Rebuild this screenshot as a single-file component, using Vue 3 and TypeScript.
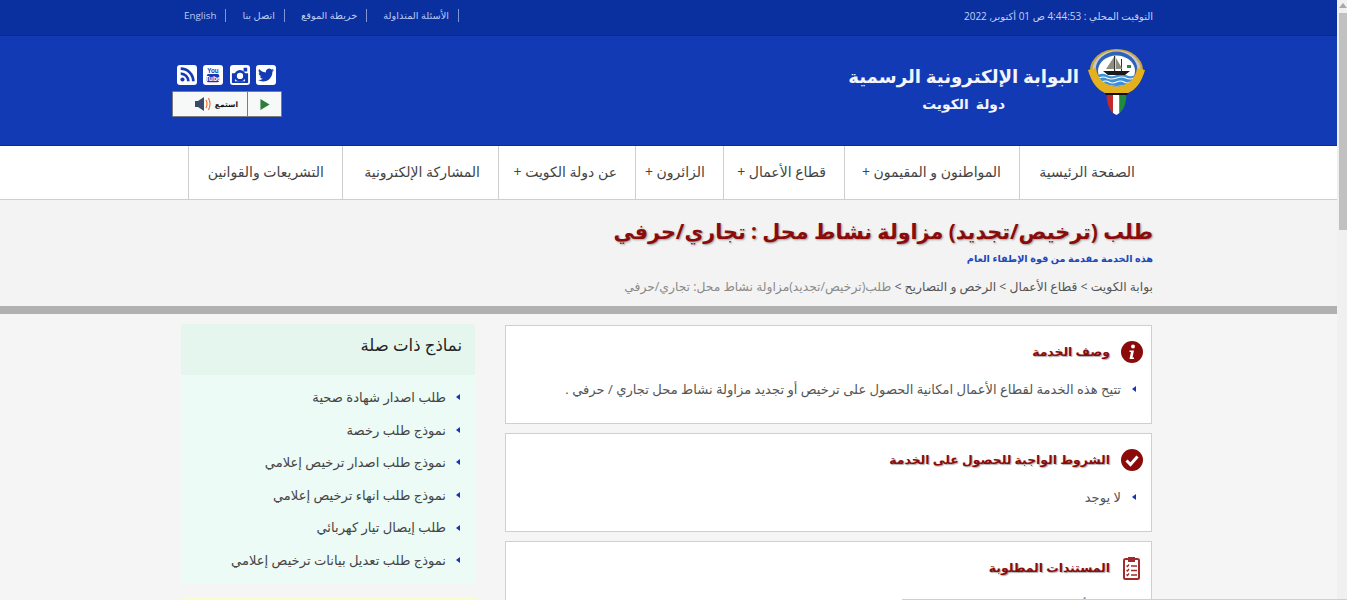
<script setup lang="ts">
const topLinks = ['الأسئلة المتداولة', 'خريطة الموقع', 'اتصل بنا', 'English'];

const navItems = [
  'الصفحة الرئيسية',
  'المواطنون و المقيمون +',
  'قطاع الأعمال +',
  'الزائرون +',
  'عن دولة الكويت +',
  'المشاركة الإلكترونية',
  'التشريعات والقوانين',
];

const relatedForms = [
  'طلب اصدار شهادة صحية',
  'نموذج طلب رخصة',
  'نموذج طلب اصدار ترخيص إعلامي',
  'نموذج طلب انهاء ترخيص إعلامي',
  'طلب إيصال تيار كهربائي',
  'نموذج طلب تعديل بيانات ترخيص إعلامي',
];
</script>

<template>
  <div class="viewport">
    <div class="page" dir="rtl">
      <div class="topbar">
        <div class="topbar__inner">
          <span class="clock">التوقيت المحلي : 4:44:53 ص 01 أكتوبر, 2022</span>
          <ul class="toplinks">
            <li v-for="link in topLinks" :key="link">{{ link }}</li>
          </ul>
        </div>
      </div>

      <header class="masthead">
        <div class="brand">
          <svg class="emblem" viewBox="0 0 57 67" aria-hidden="true">
            <ellipse cx="28.5" cy="22" rx="26.5" ry="21" fill="#c9a63a" />
            <ellipse cx="28.5" cy="22" rx="24" ry="19.5" fill="#c6c8cb" />
            <ellipse cx="28.5" cy="22" rx="21" ry="18.500" fill="#2f63b8" />
            <ellipse cx="28.5" cy="23" rx="18.500" ry="15.500" fill="#fff" />
            <path d="M10 27q4.500-2.500 9 0t9.500 0 9.500 0 9 0v2q-6 9-18.500 9T10 29z" fill="#3d8fd6" />
            <path d="M11 30q4-2 8 0t9.500 0 9.500 0 8 0M14 34q3.500-2 7 0t7.500 0 7.500 0 6 0" fill="none" stroke="#fff" stroke-width="1.200" />
            <path d="M15 23h27l-5 4H20z" fill="#1a1a1a" />
            <path d="M26 23V8h1.200v15zM33 23V11h1v12z" fill="#333" />
            <path d="M26 9l-8 12h8zM28 10l6.500 11H28z" fill="#8d8d80" />
            <path d="M39 17h4v3h-4z" fill="#2e8b3d" />
            <path d="M0 22L8 20Q10 36 28.500 39 47 36 49 20L57 22Q52 40 40 45H33L28.500 48 24 45H17Q5 40 0 22z" fill="#e4b01e" />
            <path d="M17 45h23l-2.500 4h-18z" fill="#111" />
            <path d="M18.500 47H25v18C21 62 19 55 18.500 47z" fill="#c22a2a" />
            <path d="M25 47h6.500v18l-3 2-3.500-2z" fill="#fff" />
            <path d="M31.500 47h7c-.5 8-2.500 15-7 18z" fill="#1f8a3a" />
          </svg>
          <div class="brand__text">
            <div class="brand__title">البوابة الإلكترونية الرسمية</div>
            <div class="brand__sub">دولة&nbsp; الكويت</div>
          </div>
        </div>

        <div class="tools">
          <div class="socials">
            <a class="social">
              <svg class="social__bird" viewBox="0 0 24 24"><path fill="#143bb5" d="M23.953 4.570a10 10 0 01-2.825.775 4.958 4.958 0 002.163-2.723c-.951.555-2.005.959-3.127 1.184a4.920 4.920 0 00-8.384 4.482C7.690 8.095 4.067 6.130 1.640 3.162a4.822 4.822 0 00-.666 2.475c0 1.710.870 3.213 2.188 4.096a4.904 4.904 0 01-2.228-.616v.060a4.923 4.923 0 003.946 4.827 4.996 4.996 0 01-2.212.085 4.936 4.936 0 004.604 3.417 9.867 9.867 0 01-6.102 2.105c-.390 0-.779-.023-1.170-.067a13.995 13.995 0 007.557 2.209c9.053 0 13.998-7.496 13.998-13.985 0-.210 0-.420-.015-.630A9.935 9.935 0 0024 4.590z" /></svg>
            </a>
            <a class="social">
              <svg viewBox="0 0 20 20">
                <circle cx="10" cy="11" r="5" fill="none" stroke="#143bb5" stroke-width="3" />
                <path fill="#143bb5" d="M1 8h3.500v9h11V8H19v11H1zM14 2h4v4h-4z" />
              </svg>
            </a>
            <a class="social">
              <svg viewBox="0 0 20 20">
                <rect x="3" y="9" width="14" height="9" rx="2" fill="#143bb5" />
                <text class="yt yt--you" x="10" y="7.500" text-anchor="middle">You</text>
                <text class="yt yt--tube" x="10" y="16.500" text-anchor="middle">Tube</text>
              </svg>
            </a>
            <a class="social">
              <svg viewBox="0 0 20 20">
                <circle cx="5" cy="15" r="2.300" fill="#143bb5" />
                <path fill="none" stroke="#143bb5" stroke-width="3" d="M3 8.500a8.500 8.500 0 018.500 8.500M3 3a14 14 0 0114 14" />
              </svg>
            </a>
          </div>
          <div class="listen">
            <span class="listen__play"><svg viewBox="0 0 10 12"><path d="M0 0l10 6-10 6z" fill="#2b7d3c" /></svg></span>
            <span class="listen__label">
              <b>استمع</b>
              <svg viewBox="0 0 17 14">
                <path d="M0 4h3l6-4v14l-6-4H0z" fill="#3b4a66" />
                <path d="M11 3q2 4 0 8M13.500 1q3 6 0 12" fill="none" stroke="#e8743b" stroke-width="1.200" />
              </svg>
            </span>
          </div>
        </div>
      </header>

      <nav class="mainnav">
        <ul class="mainnav__list">
          <li v-for="item in navItems" :key="item">{{ item }}</li>
        </ul>
      </nav>

      <section class="hero">
        <div class="hero__inner">
          <h1>طلب (ترخيص/تجديد) مزاولة نشاط محل : تجاري/حرفي</h1>
          <p class="hero__provider">هذه الخدمة مقدمة من قوة الإطفاء العام</p>
          <p class="crumbs">
            <span>بوابة الكويت &gt; قطاع الأعمال &gt; الرخص و التصاريح &gt;</span> طلب(ترخيص/تجديد)مزاولة نشاط محل: تجاري/حرفي
          </p>
        </div>
      </section>

      <div class="content">
        <main class="cards">
          <article class="card">
            <h2>
              <svg class="card__icon" viewBox="0 0 22 22">
                <circle cx="11" cy="11" r="11" fill="#8b0b0b" />
                <circle cx="12" cy="5.500" r="2" fill="#fff" />
                <path d="M8.500 9.500h4.500l-1.500 7h1.500v1.500H8.500l1.500-7H8.500z" fill="#fff" />
              </svg>
              وصف الخدمة
            </h2>
            <ul class="bullets">
              <li>تتيح هذه الخدمة لقطاع الأعمال امكانية الحصول على ترخيص أو تجديد مزاولة نشاط محل تجاري / حرفي .</li>
            </ul>
          </article>

          <article class="card">
            <h2>
              <svg class="card__icon" viewBox="0 0 22 22">
                <circle cx="11" cy="11" r="11" fill="#8b0b0b" />
                <path d="M5.500 11.500l4 4 7-8" fill="none" stroke="#fff" stroke-width="3" />
              </svg>
              الشروط الواجبة للحصول على الخدمة
            </h2>
            <ul class="bullets">
              <li>لا يوجد</li>
            </ul>
          </article>

          <article class="card">
            <h2>
              <svg class="card__icon card__icon--docs" viewBox="0 0 17 24">
                <rect x="1" y="3" width="15" height="20" rx="1.500" fill="none" stroke="#a32a2a" stroke-width="2" />
                <path d="M5 1h7v5H5z" fill="#a32a2a" />
                <path d="M3.500 9.500l1 1 1.500-2M3.500 14l1 1 1.500-2M3.500 18.500l1 1 1.500-2M8 10h6M8 14.500h6M8 19h6" fill="none" stroke="#a32a2a" stroke-width="1.300" />
              </svg>
              المستندات المطلوبة
            </h2>
            <ul class="bullets">
              <li>صورة أصلية</li>
            </ul>
          </article>
        </main>

        <aside class="side">
          <div class="side__box">
            <h3>نماذج ذات صلة</h3>
            <ul class="bullets bullets--side">
              <li v-for="form in relatedForms" :key="form">{{ form }}</li>
            </ul>
          </div>
          <div class="side__note"></div>
        </aside>
      </div>
    </div>

    <div class="scrollbar">
      <span class="scrollbar__arrow"></span>
      <span class="scrollbar__thumb"></span>
    </div>
    <div class="fold-line"></div>
  </div>
</template>

<style scoped>
ul {
  list-style: none;
  margin: 0;
  padding: 0;
}

.viewport {
  position: relative;
  display: flex;
  height: 600px;
  overflow: hidden;
  font-family: "Open Sans", "DejaVu Sans", Tahoma, sans-serif;
  background: #f0f0f0;
}

.page {
  flex: 0 0 1337px;
  height: 600px;
  overflow: hidden;
  background: #f5f5f5;
}

.topbar {
  height: 36px;
  box-sizing: border-box;
  background: #0a2f9f;
  border-bottom: 1px solid #0a2a8e;
}

.topbar__inner {
  display: flex;
  justify-content: space-between;
  align-items: center;
  height: 31px;
  padding: 0 184px 0 168px;
}

.clock {
  font-size: 10px;
  color: #c2d2f5;
}

.toplinks {
  display: flex;
}

.toplinks li {
  font-size: 9.800px;
  line-height: 13px;
  color: #bccdf3;
  border-right: 1px solid #7f95d6;
  padding-right: 9px;
  margin-left: 16px;
}

.masthead {
  display: flex;
  justify-content: space-between;
  height: 110px;
  box-sizing: border-box;
  padding: 12px 192px 0 172px;
  background: #133ab5;
  border-bottom: 1px solid #0b2c97;
}

.brand {
  display: flex;
  gap: 9px;
}

.emblem {
  width: 57px;
  height: 67px;
  flex: none;
}

.brand__text {
  padding-top: 15px;
  white-space: nowrap;
}

.brand__title {
  font-size: 18.200px;
  line-height: 26px;
  font-weight: 700;
  color: #f2f5fc;
}

.brand__sub {
  margin-top: 5px;
  margin-right: 74px;
  font-size: 13.800px;
  font-weight: 700;
  color: #f2f5fc;
}

.tools {
  display: flex;
  flex-direction: column;
  width: 110px;
  flex: none;
  padding-top: 17px;
  gap: 6px;
}

.socials {
  display: flex;
  gap: 6.500px;
  padding: 0 6px 0 7px;
}

.social {
  display: flex;
  width: 20px;
  height: 20px;
  flex: none;
  background: #fff;
  border-radius: 3px;
}

.social svg {
  width: 18px;
  height: 18px;
  margin: 1px;
}

.social .social__bird {
  width: 16px;
  height: 16px;
  margin: 2px;
}

.yt {
  font-family: "Liberation Sans Narrow", "Liberation Sans", sans-serif;
  font-weight: 700;
  direction: ltr;
}

.yt--you {
  font-size: 7px;
  fill: #143bb5;
}

.yt--tube {
  font-size: 7.500px;
  fill: #fff;
}

.listen {
  display: flex;
  height: 26px;
  box-sizing: border-box;
  background: #f7f8f8;
  border: 1px solid #7b7b80;
  border-radius: 1px;
}

.listen__play {
  display: flex;
  align-items: center;
  justify-content: center;
  width: 33px;
  flex: none;
  border-left: 1px solid #7b7b80;
}

.listen__play svg {
  width: 10px;
  height: 11px;
}

.listen__label {
  display: flex;
  align-items: center;
  gap: 3px;
  padding-right: 9px;
}

.listen__label b {
  font-size: 7.500px;
  color: #111;
}

.listen__label svg {
  width: 17px;
  height: 14px;
}

.mainnav {
  height: 54px;
  box-sizing: border-box;
  background: #fff;
  border-bottom: 1px solid #cfcfcf;
}

.mainnav__list {
  display: grid;
  grid-template-columns: 134px 175px 121px 88px 137px 156px 154px;
  height: 53px;
  padding-right: 184px;
}

.mainnav__list li {
  display: flex;
  align-items: center;
  padding: 0 18px 2px 0;
  border-left: 1px solid #cfcfcf;
  font-size: 14px;
  color: #444;
  white-space: nowrap;
}

.hero {
  height: 106px;
  box-sizing: border-box;
  background: #f3f3f3;
}

.hero__inner {
  padding: 15px 184px 0 0;
}

.hero h1 {
  margin: 0;
  font-size: 20.700px;
  line-height: 32px;
  font-weight: 700;
  color: #8b0a0a;
  text-shadow: 1px 1px 2px #999;
}

.hero__provider {
  margin: 4px 0 0;
  font-size: 9.700px;
  line-height: 16px;
  font-weight: 700;
  color: #1f48b8;
}

.crumbs {
  margin: 11px 0 0;
  font-size: 12.300px;
  line-height: 18px;
  color: #8a8a8a;
}

.crumbs span {
  color: #555;
}

.content {
  display: flex;
  gap: 30px;
  border-top: 8px solid #b0b0b0;
  padding: 11px 185px 0 0;
}

.cards {
  display: flex;
  flex-direction: column;
  gap: 9px;
  width: 647px;
  flex: none;
}

.card {
  min-height: 99px;
  box-sizing: border-box;
  background: #fff;
  border: 1px solid #cfcfcf;
  padding: 14px 8px 0;
}

.card h2 {
  display: flex;
  align-items: center;
  gap: 11px;
  margin: 0;
  font-size: 12.400px;
  line-height: 24px;
  font-weight: 700;
  color: #8b0a0a;
  text-shadow: 1px 1px 1px #aaa;
}

.card__icon {
  width: 22px;
  height: 22px;
  flex: none;
}

.card__icon--docs {
  width: 17px;
  height: 24px;
  margin: 0 3px 0 2px;
}

.bullets li {
  position: relative;
  padding-right: 15px;
  font-size: 13.100px;
  color: #555;
}

.bullets li::before {
  content: "";
  position: absolute;
  right: 0;
  top: 50%;
  margin-top: -3px;
  border-style: solid;
  border-width: 3.500px 4px 3.500px 0;
  border-color: transparent #1535b5 transparent transparent;
}

.card .bullets {
  margin-top: 12px;
  padding-right: 7px;
}

.card .bullets li {
  line-height: 26px;
}

.side {
  width: 294px;
  flex: none;
  margin-top: -1px;
}

.side__box {
  height: 259px;
  box-sizing: border-box;
  background: #ecfbf6;
}

.side__box h3 {
  margin: 0;
  height: 51px;
  padding: 0 13px;
  font-size: 16.500px;
  font-weight: 400;
  line-height: 42px;
  color: #222;
  background: #e5f6ef;
}

.bullets--side {
  padding: 6px 15px 0 0;
}

.bullets--side li {
  padding-right: 14px;
  font-size: 13.100px;
  line-height: 32.600px;
  color: #444;
  white-space: nowrap;
}

.side__note {
  height: 40px;
  margin-top: 15px;
  background: #fbfbd0;
}

.scrollbar {
  position: relative;
  flex: 1;
}

.scrollbar__arrow {
  position: absolute;
  top: 3px;
  left: 2px;
  border-style: solid;
  border-width: 0 4px 5px;
  border-color: transparent transparent #a8a8a8;
}

.scrollbar__thumb {
  position: absolute;
  top: 13px;
  left: 2px;
  width: 8px;
  height: 217px;
  background: #c1c1c1;
}

.fold-line {
  position: absolute;
  right: 0;
  bottom: 0;
  width: 445px;
  height: 1px;
  background: #cfcfcf;
}
</style>

<style>
html,
body {
  margin: 0;
  overflow: hidden;
}
</style>
